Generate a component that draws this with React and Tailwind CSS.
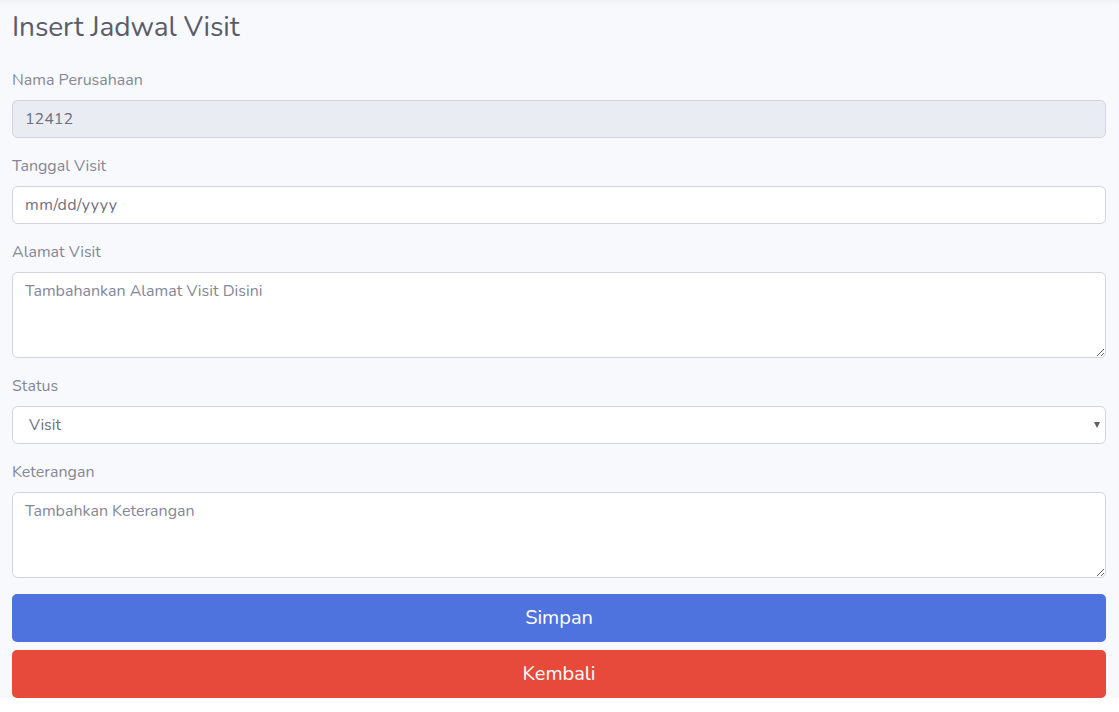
export default function App() {
  const font = { fontFamily: '"Nunito", "Lato", "Open Sans", sans-serif' };
  const inputCls =
    "block w-full h-[38px] px-3 rounded-[5.6px] border border-[#d1d3e2] text-[16px] text-[#6e707e] outline-none";
  const labelCls = "block text-[16px] leading-6 text-[#858796] mb-2";
  return (
    <div className="min-h-[712px] bg-white" style={font}>
      <div className="bg-[#f8f9fc] pt-[10px] pl-3 pr-[13px] shadow-[inset_0_4px_4px_-2px_rgba(0,0,0,0.04)]">
        <h3 className="text-[28px] leading-[34px] text-[#5a5c69] mb-[24px] tracking-[-0.1px]">Insert Jadwal Visit</h3>
        <div className="mb-4">
          <label className={labelCls}>Nama Perusahaan</label>
          <input className={inputCls + " bg-[#eaecf4]"} value="12412" readOnly disabled />
        </div>
        <div className="mb-4">
          <label className={labelCls}>Tanggal Visit</label>
          <input className={inputCls + " bg-white tracking-[0.5px]"} value="mm/dd/yyyy" readOnly />
        </div>
        <div className="mb-4">
          <label className={labelCls}>Alamat Visit</label>
          <textarea
            rows={3}
            className="block w-full h-[86px] px-3 py-[6px] leading-6 rounded-[5.6px] border border-[#d1d3e2] bg-white text-[16px] text-[#6e707e] placeholder:text-[#858796] outline-none"
            placeholder="Tambahankan Alamat Visit Disini"
          />
        </div>
        <div className="mb-4">
          <label className={labelCls}>Status</label>
          <div className="relative">
            <select className={inputCls + " bg-white appearance-none pl-4"} defaultValue="Visit">
              <option>Visit</option>
            </select>
            <span className="pointer-events-none absolute right-[6px] top-1/2 -translate-y-1/2 w-0 h-0 border-l-[3.5px] border-r-[3.5px] border-t-[6px] border-l-transparent border-r-transparent border-t-[#5a5c69]" />
          </div>
        </div>
        <div className="mb-4">
          <label className={labelCls}>Keterangan</label>
          <textarea
            rows={3}
            className="block w-full h-[86px] px-3 py-[6px] leading-6 rounded-[5.6px] border border-[#d1d3e2] bg-white text-[16px] text-[#6e707e] placeholder:text-[#858796] outline-none"
            placeholder="Tambahkan Keterangan"
          />
        </div>
        <button className="block w-full h-[48px] rounded-[5px] bg-[#4e73df] text-white text-[20px] mb-2">Simpan</button>
        <button className="block w-full h-[48px] rounded-[5px] bg-[#e74a3b] text-white text-[20px]">Kembali</button>
      </div>
    </div>
  );
}
